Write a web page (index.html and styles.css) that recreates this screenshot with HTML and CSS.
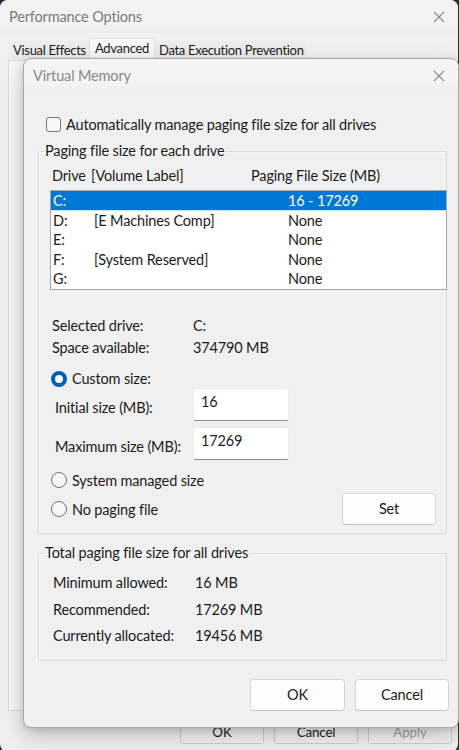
FILE: index.html
```html
<!DOCTYPE html>
<html>
<head>
<meta charset="utf-8">
<link rel="stylesheet" href="styles.css">
</head>
<body>
<div class="perf">
  <div class="perf-title">
    <span>Performance Options</span>
    <svg class="x" width="12" height="12" viewBox="0 0 12 12"><path d="M1 1L11 11M11 1L1 11" stroke="#8a8a8a" stroke-width="1.1" fill="none"/></svg>
  </div>
  <div class="tabs">
    <div class="tab">Visual Effects</div>
    <div class="tab sel">Advanced</div>
    <div class="tab">Data Execution Prevention</div>
  </div>
  <div class="panel"></div>
  <div class="perf-btns">
    <div class="pbtn">OK</div>
    <div class="pbtn">Cancel</div>
    <div class="pbtn dis">Apply</div>
  </div>
</div>

<div class="vm">
  <div class="vm-title">
    <span>Virtual Memory</span>
    <svg class="x" width="12" height="12" viewBox="0 0 12 12"><path d="M1 1L11 11M11 1L1 11" stroke="#8a8a8a" stroke-width="1.1" fill="none"/></svg>
  </div>
  <div class="vm-body">
    <div class="auto">
      <span class="cb"></span>
      <span>Automatically manage paging file size for all drives</span>
    </div>

    <fieldset class="grp g1">
      <legend>Paging file size for each drive</legend>
      <div class="hdr">
        <span>Drive</span><span>[Volume Label]</span><span>Paging File Size (MB)</span>
      </div>
      <div class="list">
        <div class="row sel"><span>C:</span><span></span><span>16 - 17269</span></div>
        <div class="row"><span>D:</span><span>[E Machines Comp]</span><span>None</span></div>
        <div class="row"><span>E:</span><span></span><span>None</span></div>
        <div class="row"><span>F:</span><span>[System Reserved]</span><span>None</span></div>
        <div class="row"><span>G:</span><span></span><span>None</span></div>
      </div>
      <div class="info">
        <span>Selected drive:</span><span>C:</span>
        <span>Space available:</span><span>374790 MB</span>
      </div>
      <div class="radio-row custom">
        <span class="rb on"></span><span>Custom size:</span>
      </div>
      <div class="field first">
        <span class="flabel">Initial size (MB):</span>
        <div class="input">16</div>
      </div>
      <div class="field">
        <span class="flabel">Maximum size (MB):</span>
        <div class="input">17269</div>
      </div>
      <div class="radio-row sys">
        <span class="rb"></span><span>System managed size</span>
      </div>
      <div class="nopage">
        <div class="radio-row">
          <span class="rb"></span><span>No paging file</span>
        </div>
        <div class="btn set">Set</div>
      </div>
    </fieldset>

    <fieldset class="grp g2">
      <legend>Total paging file size for all drives</legend>
      <div class="totals">
        <span>Minimum allowed:</span><span>16 MB</span>
        <span>Recommended:</span><span>17269 MB</span>
        <span>Currently allocated:</span><span>19456 MB</span>
      </div>
    </fieldset>

    <div class="vm-btns">
      <div class="btn ok">OK</div>
      <div class="btn">Cancel</div>
    </div>
  </div>
</div>
</body>
</html>
```

FILE: styles.css
```css
* { box-sizing: border-box; }
html, body { margin: 0; padding: 0; }
body {
  width: 459px;
  height: 750px;
  background: #2a2a2a;
  font-family: "Segoe UI", Lato, "Noto Sans", sans-serif;
  font-size: 14.5px;
  letter-spacing: -0.15px;
  color: #1b1b1b;
  position: relative;
  overflow: hidden;
}

/* Outer window */
.perf {
  width: 458px;
  height: 752px;
  background: #f0f0f0;
  border-radius: 8px;
  display: flex;
  flex-direction: column;
}
.perf-title {
  height: 33px;
  display: flex;
  align-items: center;
  justify-content: space-between;
  padding: 0 13px 0 9px;
  color: #7a7a7a;
  background: linear-gradient(#f3f3f3 70%, #ececec);
  border-radius: 8px 8px 0 0;
}
.perf-title .x, .vm-title .x { margin-top: 1px; }
.tabs {
  display: flex;
  align-items: flex-end;
  padding-left: 9px;
  height: 27px;
  font-size: 13px;
  letter-spacing: -0.3px;
}
.tab {
  height: 19px;
  padding: 0 3px 0 4px;
  background: #ececec;
  line-height: 19px;
}
.tab.sel {
  height: 22px;
  background: #f7f7f7;
  border: 1px solid #e2e2e2;
  border-bottom: none;
  padding: 0 5px;
  line-height: 18px;
}
.panel {
  margin: 0 7px 0 8px;
  height: 651px;
  background: #f7f7f7;
  border: 1px solid #dcdcdc;
}
.perf-btns {
  display: flex;
  justify-content: flex-end;
  gap: 10px;
  padding: 9px 6px 0 0;
}
.pbtn {
  width: 84px;
  height: 24px;
  background: #f3f3f3;
  border: 1px solid #cfcfcf;
  border-radius: 3px;
  text-align: center;
  line-height: 22px;
  font-size: 13.4px;
}
.pbtn.dis { color: #a2a2a2; }

/* Virtual Memory dialog (overlay window) */
.vm {
  position: absolute;
  left: 23px;
  top: 58px;
  width: 436px;
  height: 670px;
  background: #f0f0f0;
  border: 1px solid #a9a9a9;
  border-radius: 8px;
  box-shadow: 0 8px 22px rgba(0,0,0,0.22), 0 2px 6px rgba(0,0,0,0.12);
}
.vm-title {
  height: 33px;
  display: flex;
  align-items: center;
  justify-content: space-between;
  padding: 0 13px 0 9px;
  color: #8a8a8a;
  background: linear-gradient(#f4f4f4 70%, #eeeeee);
  border-radius: 8px 8px 0 0;
}
.vm-body {
  padding: 0 11px 0 14px;
}
.auto {
  margin-top: 23px;
  height: 19px;
  display: flex;
  align-items: center;
  padding-left: 8px;
  gap: 5px;
}
.cb {
  width: 15px;
  height: 15px;
  border: 1px solid #777;
  border-radius: 3px;
  background: #f7f7f7;
}

/* group boxes */
.grp {
  margin: 7px 0 0 0;
  padding: 0;
  border: 1px solid #dadada;
  box-shadow: inset 1px 1px 0 #fafafa;
  border-radius: 2px;
  min-width: 0;
}
.grp legend {
  margin-left: 5px;
  padding: 0 1px;
  line-height: 20px;
  height: 20px;
}
.hdr {
  margin-top: 5px;
  height: 20px;
  line-height: 20px;
  display: grid;
  grid-template-columns: 39px 160px auto;
  padding-left: 13px;
}
.list {
  margin: 4px -1px 0 11px;
  height: 100px;
  background: #fff;
  border: 1px solid #a8a8a8;
  padding: 0;
}
.row {
  height: 19.6px;
  line-height: 19.6px;
  display: grid;
  grid-template-columns: 41px 194px auto;
  padding-left: 2px;
}
.row.sel {
  background: #0078d7;
  color: #fff;
  box-shadow: inset 0 -1px 0 #cfe3f6;
}
.info {
  margin-top: 25px;
  display: grid;
  grid-template-columns: 141px auto;
  grid-auto-rows: 22px;
  line-height: 22px;
  padding-left: 13px;
}
.radio-row {
  display: flex;
  align-items: center;
  gap: 5px;
  height: 20px;
}
.radio-row.custom { margin-top: 10px; padding-left: 12px; height: 19px; }
.rb {
  width: 16px;
  height: 16px;
  border-radius: 50%;
  border: 1px solid #707070;
  background: #f7f7f7;
  flex: none;
}
.rb.on {
  border: 4.5px solid #005fb8;
  background: #fff;
}
.field {
  display: grid;
  grid-template-columns: 138px 96px;
  padding-left: 16px;
  margin-top: 6px;
  align-items: center;
}
.field.first { margin-top: 0; }
.flabel { padding-top: 5px; }
.input {
  height: 33px;
  background: #fff;
  border: 1px solid #ececec;
  border-bottom: 1px solid #8c8c8c;
  border-radius: 3px;
  padding: 3px 0 0 7px;
  line-height: 20px;
}
.radio-row.sys { margin-top: 10px; padding-left: 12px; }
.nopage {
  margin-top: 3px;
  display: flex;
  align-items: center;
  justify-content: space-between;
  padding-left: 12px;
  padding-right: 10px;
  margin-bottom: 8px;
}
.btn {
  width: 95px;
  height: 32px;
  background: #fdfdfd;
  border: 1px solid #d6d6d6;
  border-bottom-color: #c4c4c4;
  border-radius: 4px;
  text-align: center;
  line-height: 30px;
}
.btn.set { width: 94px; }
.g2 { margin-top: 9px; }
.totals {
  margin-top: 10px;
  display: grid;
  grid-template-columns: 142px auto;
  grid-auto-rows: 26.5px;
  line-height: 20px;
  padding-left: 14px;
  padding-bottom: 7px;
}
.vm-btns {
  margin-top: 18px;
  margin-right: -2px;
  display: flex;
  justify-content: flex-end;
  gap: 10px;
}
.vm-btns .btn { width: 94px; }
.vm-btns .btn.ok { width: 95px; }
```
